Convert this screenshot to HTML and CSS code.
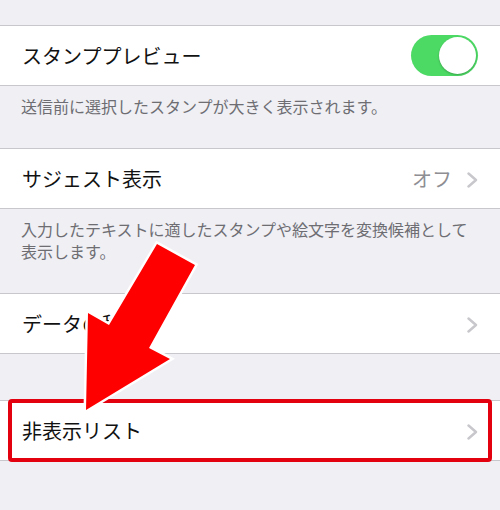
FILE: index.html
```html
<!DOCTYPE html>
<html lang="ja">
<head>
<meta charset="utf-8">
<link rel="stylesheet" href="styles.css">
</head>
<body>
<div class="page">
  <div class="group">
    <div class="row">
      <span class="title">スタンププレビュー</span>
      <span class="toggle"><span class="knob"></span></span>
    </div>
  </div>
  <div class="footer">送信前に選択したスタンプが大きく表示されます。</div>

  <div class="group">
    <div class="row">
      <span class="title">サジェスト表示</span>
      <span class="detail">オフ</span>
      <svg class="chev" viewBox="0 0 12 16" width="12" height="16"><polyline points="1.5,1.5 9,8 1.5,14.5"/></svg>
    </div>
  </div>
  <div class="footer">入力したテキストに適したスタンプや絵文字を変換候補として<br>表示します。</div>

  <div class="group">
    <div class="row">
      <span class="title">データの移行</span>
      <svg class="chev" viewBox="0 0 12 16" width="12" height="16"><polyline points="1.5,1.5 9,8 1.5,14.5"/></svg>
    </div>
  </div>

  <div class="group last">
    <div class="row">
      <span class="title">非表示リスト</span>
      <svg class="chev" viewBox="0 0 12 16" width="12" height="16"><polyline points="1.5,1.5 9,8 1.5,14.5"/></svg>
    </div>
    <div class="highlight"></div>
  </div>

  <svg class="arrow" viewBox="0 0 500 510" width="500" height="510">
    <polygon points="157,244 195,265 149,348 170,359 86,410 88,313 109,325"/>
  </svg>
</div>
</body>
</html>
```

FILE: styles.css
```css
html, body {
  margin: 0;
  padding: 0;
  background: #efeff4;
}
.page {
  position: relative;
  width: 500px;
  height: 510px;
  overflow: hidden;
  padding-top: 25px;
  box-sizing: border-box;
  font-family: "Noto Sans CJK JP", "Noto Sans", sans-serif;
}
.group {
  position: relative;
  background: #fff;
  border-top: 1px solid #c8c7cc;
  border-bottom: 1px solid #c8c7cc;
}
.group.last {
  margin-top: 46px;
}
.row {
  height: 59px;
  display: flex;
  align-items: center;
  padding: 0 21px 0 22px;
}
.title {
  flex: 1;
  font-size: 20px;
  color: #111;
}
.detail {
  font-size: 20px;
  color: #8e8e93;
  margin-right: 15px;
}
.chev {
  display: block;
  margin-top: 2px;
}
.chev polyline {
  fill: none;
  stroke: #c7c7cc;
  stroke-width: 2.4;
  stroke-linecap: round;
  stroke-linejoin: round;
}
.toggle {
  width: 67px;
  height: 41px;
  border-radius: 21px;
  background: #4cd964;
  display: flex;
  justify-content: flex-end;
  align-items: center;
  margin-right: 1px;
}
.knob {
  width: 37px;
  height: 37px;
  border-radius: 50%;
  background: #fff;
  margin-right: 2px;
  box-shadow: 0 1px 2px rgba(0,0,0,0.25);
}
.footer {
  font-size: 16px;
  line-height: 22px;
  color: #6d6d72;
  padding: 9px 21px 31px 21px;
}
.highlight {
  position: absolute;
  left: 8px;
  right: 8px;
  top: -2px;
  bottom: -2px;
  border: 4px solid #e3000f;
  border-radius: 4px;
}
.arrow {
  position: absolute;
  left: 0;
  top: 0;
}
.arrow polygon {
  fill: #ff0000;
  stroke: #fff;
  stroke-width: 5;
  stroke-linejoin: miter;
  paint-order: stroke;
}
```
